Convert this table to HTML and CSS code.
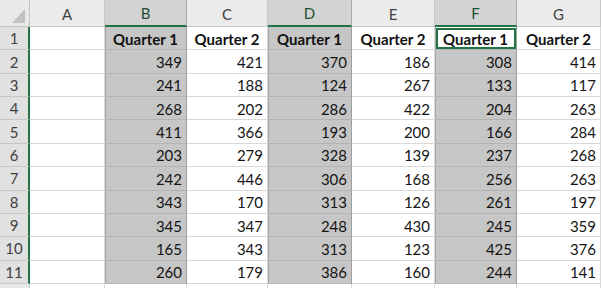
FILE: index.html
```html
<!DOCTYPE html>
<html>
<head>
<meta charset="utf-8">
<link rel="stylesheet" href="styles.css">
</head>
<body>
<div class="sheet">
  <div class="corner"><svg class="tri" width="30" height="27" viewBox="0 0 30 27"><polygon points="25,9 25,23 12,23" fill="#c2c2c2"/></svg></div>
  <div class="ch">A</div>
  <div class="ch sel">B</div>
  <div class="ch">C</div>
  <div class="ch sel">D</div>
  <div class="ch">E</div>
  <div class="ch sel">F</div>
  <div class="ch">G</div>

  <div class="rh">1</div>
  <div class="c"></div>
  <div class="c s hd">Quarter 1</div>
  <div class="c hd">Quarter 2</div>
  <div class="c s hd">Quarter 1</div>
  <div class="c hd">Quarter 2</div>
  <div class="c s hd active">Quarter 1</div>
  <div class="c hd">Quarter 2</div>

  <div class="rh">2</div>
  <div class="c"></div><div class="c s">349</div><div class="c">421</div><div class="c s">370</div><div class="c">186</div><div class="c s">308</div><div class="c">414</div>

  <div class="rh">3</div>
  <div class="c"></div><div class="c s">241</div><div class="c">188</div><div class="c s">124</div><div class="c">267</div><div class="c s">133</div><div class="c">117</div>

  <div class="rh">4</div>
  <div class="c"></div><div class="c s">268</div><div class="c">202</div><div class="c s">286</div><div class="c">422</div><div class="c s">204</div><div class="c">263</div>

  <div class="rh">5</div>
  <div class="c"></div><div class="c s">411</div><div class="c">366</div><div class="c s">193</div><div class="c">200</div><div class="c s">166</div><div class="c">284</div>

  <div class="rh">6</div>
  <div class="c"></div><div class="c s">203</div><div class="c">279</div><div class="c s">328</div><div class="c">139</div><div class="c s">237</div><div class="c">268</div>

  <div class="rh">7</div>
  <div class="c"></div><div class="c s">242</div><div class="c">446</div><div class="c s">306</div><div class="c">168</div><div class="c s">256</div><div class="c">263</div>

  <div class="rh">8</div>
  <div class="c"></div><div class="c s">343</div><div class="c">170</div><div class="c s">313</div><div class="c">126</div><div class="c s">261</div><div class="c">197</div>

  <div class="rh">9</div>
  <div class="c"></div><div class="c s">345</div><div class="c">347</div><div class="c s">248</div><div class="c">430</div><div class="c s">245</div><div class="c">359</div>

  <div class="rh">10</div>
  <div class="c"></div><div class="c s">165</div><div class="c">343</div><div class="c s">313</div><div class="c">123</div><div class="c s">425</div><div class="c">376</div>

  <div class="rh">11</div>
  <div class="c"></div><div class="c s">260</div><div class="c">179</div><div class="c s">386</div><div class="c">160</div><div class="c s">244</div><div class="c">141</div>

  <div class="rh rh-plain"></div>
  <div class="c"></div><div class="c"></div><div class="c"></div><div class="c"></div><div class="c"></div><div class="c"></div><div class="c"></div>
</div>
</body>
</html>
```

FILE: styles.css
```css
html, body {
  margin: 0;
  padding: 0;
  background: #ffffff;
  overflow: hidden;
}

.sheet {
  display: grid;
  grid-template-columns: 30px 75px 82px 81px 84px 83px 82px 84px;
  grid-template-rows: 27px repeat(11, 23.36px) 24px;
  width: 601px;
  height: 288px;
  overflow: hidden;
  font-family: Lato, "Open Sans", sans-serif;
}

.corner {
  box-sizing: border-box;
  background: #e9e9e9;
  border-right: 1px solid #c4c4c4;
  border-bottom: 1px solid #c4c4c4;
}

.tri {
  display: block;
}

.ch {
  box-sizing: border-box;
  background: #ebebeb;
  border-right: 1px solid #c8c8c8;
  border-bottom: 1px solid #c8c8c8;
  display: flex;
  align-items: center;
  justify-content: center;
  padding-top: 1px;
  font-size: 15px;
  color: #404040;
}

.ch.sel {
  background: #d3d3d3;
  border-right-color: #a9a9a9;
  border-bottom: 2px solid #217346;
  color: #1d4f33;
}

.rh {
  box-sizing: border-box;
  background: #e1e1e1;
  border-right: 2px solid #217346;
  border-bottom: 1px solid #c6c6c6;
  display: flex;
  align-items: center;
  justify-content: center;
  font-size: 15px;
  color: #404040;
}

.rh-plain {
  border-right: 1px solid #c6c6c6;
  background: #e9e9e9;
}

.c {
  box-sizing: border-box;
  border-right: 1px solid #d9d9d9;
  border-bottom: 1px solid #d9d9d9;
  display: flex;
  align-items: center;
  justify-content: flex-end;
  padding: 1px 4px 0 4px;
  font-size: 15px;
  color: #141414;
  white-space: nowrap;
}

.c.s {
  background: #c6c6c6;
  border-right-color: #9e9e9e;
  border-bottom-color: #b3b3b3;
  box-shadow: inset 1px 0 0 #a6a6a6;
}

.c.hd {
  justify-content: center;
  font-weight: bold;
  color: #111111;
}

.c.active {
  background: #ffffff;
  outline: 2px solid #217346;
  outline-offset: -3px;
}
```
